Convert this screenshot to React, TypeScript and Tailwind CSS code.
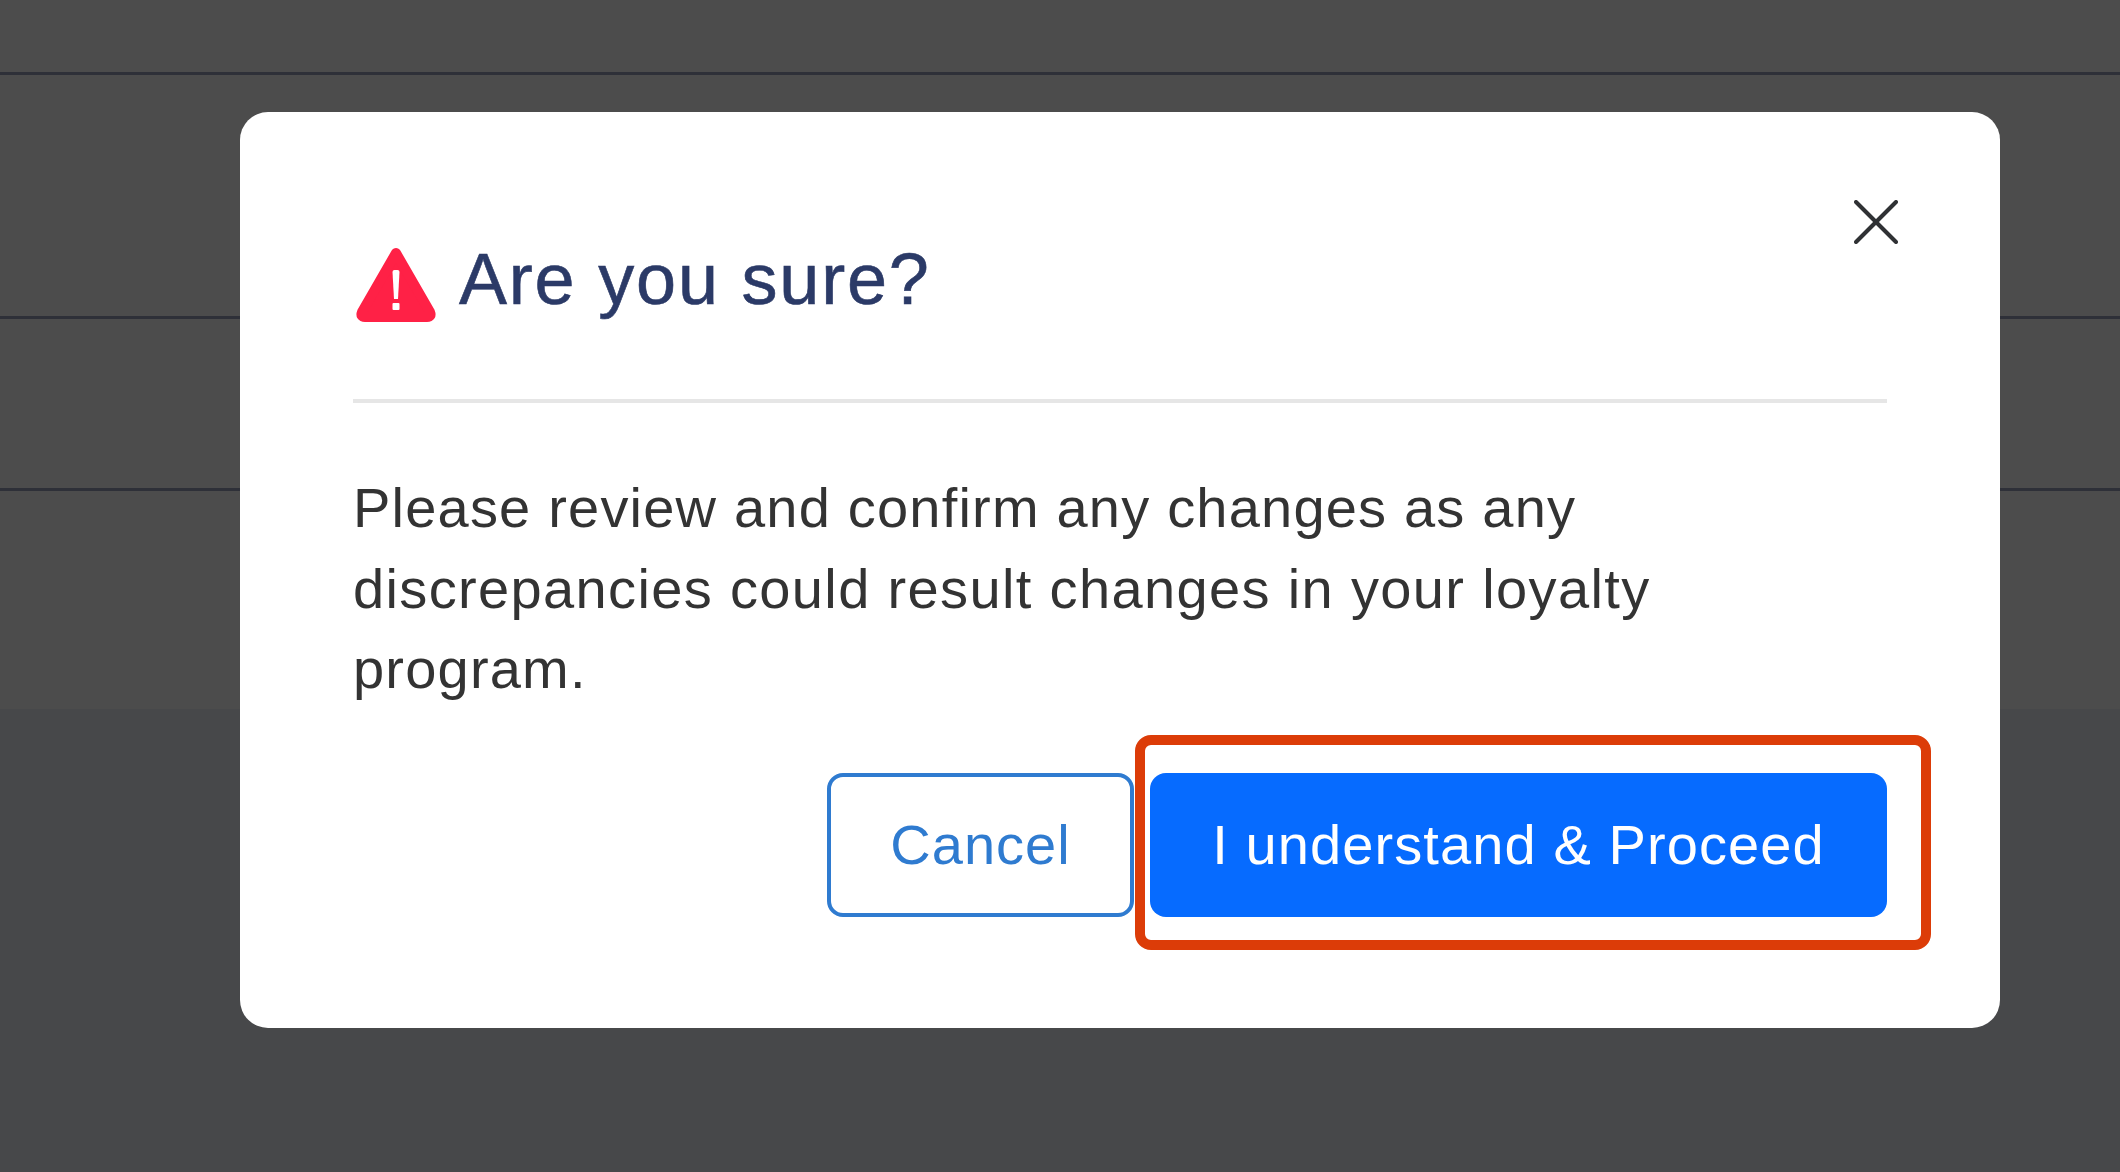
import React from 'react'

const font = { fontFamily: '"Liberation Sans", Arial, sans-serif' }

function WarningIcon() {
  return (
    <svg viewBox="0 0 80 76" className="w-[80px] h-[76px] shrink-0">
      <path
        d="M40 6 L74 65 Q76 70 71 70 L9 70 Q4 70 6 65 Z"
        fill="#ff2146"
        stroke="#ff2146"
        strokeWidth="10"
        strokeLinejoin="round"
      />
      <path d="M36.5 25 Q36.5 23 38.5 23 L41.5 23 Q43.5 23 43.5 25 L42 52 L38 52 Z" fill="#ffffff" />
      <rect x="36.5" y="56" width="7" height="7" rx="1" fill="#ffffff" />
    </svg>
  )
}

function CloseIcon() {
  return (
    <svg viewBox="0 0 44 44" className="w-[44px] h-[44px]" fill="none" stroke="#2f3134" strokeWidth="4" strokeLinecap="round">
      <path d="M2 2 L42 42" />
      <path d="M42 2 L2 42" />
    </svg>
  )
}

export default function App(): React.JSX.Element {
  return (
    <div className="relative w-[2120px] h-[1172px] overflow-hidden bg-[#47484a]" style={font}>
      {/* page behind the overlay */}
      <div className="bg-[#4c4c4c] h-[709px] flex flex-col">
        <div className="h-[75px] border-b-[3px] border-[#2e3038]" />
        <div className="h-[244px] border-b-[3px] border-[#2e3038]" />
        <div className="h-[172px] border-b-[3px] border-[#2e3038]" />
      </div>

      {/* dialog */}
      <div className="absolute left-[240px] top-[112px] w-[1760px] h-[916px] bg-white rounded-[28px] px-[113px] pt-[135px]">
        <button className="absolute left-[1614px] top-[88px]">
          <CloseIcon />
        </button>

        <div className="flex items-start gap-[23px] h-[76px] pl-[3px]">
          <WarningIcon />
          <h2 className="text-[72px] leading-[64px] tracking-[1.8px] text-[#2b3a67] font-normal whitespace-nowrap [-webkit-text-stroke:0.6px_#2b3a67]">
            Are you sure?
          </h2>
        </div>

        <div className="mt-[76px] h-[4px] bg-[#e6e6e6]" />

        <p className="mt-[65px] text-[56px] leading-[80.5px] tracking-[1.2px] text-[#333333]">
          Please review and confirm any changes as any
          <br />
          <span className="tracking-[1.36px]">discrepancies could result changes in your loyalty</span>
          <br />
          program.
        </p>

        <div className="mt-[63px] flex justify-end gap-[16px]">
          <button className="w-[307px] h-[144px] rounded-[16px] border-[4px] border-[#2f7bd0] bg-white text-[#2f7bd0] text-[56px] tracking-[1px]">
            Cancel
          </button>
          <div className="relative">
            <button className="w-[737px] h-[144px] rounded-[16px] bg-[#066bff] text-white text-[56px] tracking-[1.1px]">
              I understand &amp; Proceed
            </button>
            {/* red annotation box */}
            <div className="absolute left-[-15px] right-[-44px] top-[-38px] bottom-[-33px] rounded-[16px] border-[10px] border-[#dc3c08]" />
          </div>
        </div>
      </div>
    </div>
  )
}
